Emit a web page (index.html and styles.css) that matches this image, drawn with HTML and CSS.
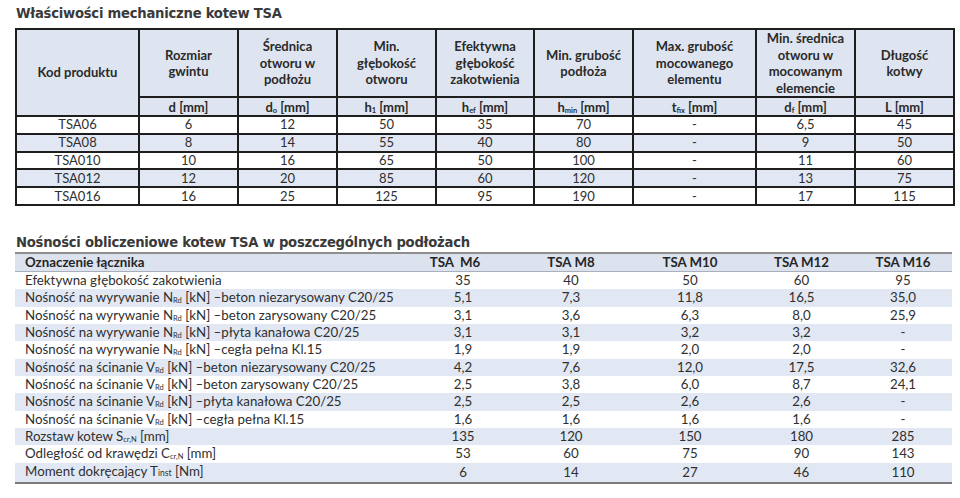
FILE: index.html
```html
<!DOCTYPE html>
<html lang="pl">
<head>
<meta charset="utf-8">
<link rel="stylesheet" href="styles.css">
</head>
<body>
<div class="page">
  <h2 class="title t1">Właściwości mechaniczne kotew TSA</h2>
  <table class="mech">
    <colgroup>
      <col class="w123"><col class="w99"><col class="w99"><col class="w99"><col class="w98"><col class="w99"><col class="w123"><col class="w99"><col class="w99">
    </colgroup>
    <thead>
      <tr class="h1">
        <th rowspan="2">Kod produktu</th>
        <th>Rozmiar<br>gwintu</th>
        <th>Średnica<br>otworu w<br>podłożu</th>
        <th>Min.<br>głębokość<br>otworu</th>
        <th>Efektywna<br>głębokość<br>zakotwienia</th>
        <th>Min. grubość<br>podłoża</th>
        <th>Max. grubość<br>mocowanego<br>elementu</th>
        <th>Min. średnica<br>otworu w<br>mocowanym<br>elemencie</th>
        <th>Długość<br>kotwy</th>
      </tr>
      <tr class="h2">
        <th>d [mm]</th>
        <th>d<sub>o</sub> [mm]</th>
        <th>h<sub>1</sub> [mm]</th>
        <th>h<sub>ef</sub> [mm]</th>
        <th>h<sub>min</sub> [mm]</th>
        <th>t<sub>fix</sub> [mm]</th>
        <th>d<sub>f</sub> [mm]</th>
        <th>L [mm]</th>
      </tr>
    </thead>
    <tbody>
      <tr><td>TSA06</td><td>6</td><td>12</td><td>50</td><td>35</td><td>70</td><td>-</td><td>6,5</td><td>45</td></tr>
      <tr class="alt"><td>TSA08</td><td>8</td><td>14</td><td>55</td><td>40</td><td>80</td><td>-</td><td>9</td><td>50</td></tr>
      <tr><td>TSA010</td><td>10</td><td>16</td><td>65</td><td>50</td><td>100</td><td>-</td><td>11</td><td>60</td></tr>
      <tr class="alt"><td>TSA012</td><td>12</td><td>20</td><td>85</td><td>60</td><td>120</td><td>-</td><td>13</td><td>75</td></tr>
      <tr><td>TSA016</td><td>16</td><td>25</td><td>125</td><td>95</td><td>190</td><td>-</td><td>17</td><td>115</td></tr>
    </tbody>
  </table>

  <h2 class="title t2">Nośności obliczeniowe kotew TSA w poszczególnych podłożach</h2>
  <table class="loads">
    <colgroup>
      <col class="c0"><col class="c1"><col class="c2"><col class="c3"><col class="c4"><col class="c5">
    </colgroup>
    <thead>
      <tr>
        <th class="lbl">Oznaczenie łącznika</th>
        <th class="m6">TSA&nbsp; M6</th>
        <th>TSA M8</th>
        <th>TSA M10</th>
        <th>TSA M12</th>
        <th>TSA M16</th>
      </tr>
    </thead>
    <tbody>
      <tr><td class="lbl">Efektywna głębokość zakotwienia</td><td class="m6">35</td><td>40</td><td>50</td><td>60</td><td>95</td></tr>
      <tr class="alt"><td class="lbl">Nośność na wyrywanie N<sub>Rd</sub> [kN] –beton niezarysowany C20/25</td><td class="m6">5,1</td><td>7,3</td><td>11,8</td><td>16,5</td><td>35,0</td></tr>
      <tr><td class="lbl">Nośność na wyrywanie N<sub>Rd</sub> [kN] –beton zarysowany C20/25</td><td class="m6">3,1</td><td>3,6</td><td>6,3</td><td>8,0</td><td>25,9</td></tr>
      <tr class="alt"><td class="lbl">Nośność na wyrywanie N<sub>Rd</sub> [kN] –płyta kanałowa C20/25</td><td class="m6">3,1</td><td>3,1</td><td>3,2</td><td>3,2</td><td>-</td></tr>
      <tr><td class="lbl">Nośność na wyrywanie N<sub>Rd</sub> [kN] –cegła pełna Kl.15</td><td class="m6">1,9</td><td>1,9</td><td>2,0</td><td>2,0</td><td>-</td></tr>
      <tr class="alt"><td class="lbl">Nośność na ścinanie V<sub>Rd</sub> [kN] –beton niezarysowany C20/25</td><td class="m6">4,2</td><td>7,6</td><td>12,0</td><td>17,5</td><td>32,6</td></tr>
      <tr><td class="lbl">Nośność na ścinanie V<sub>Rd</sub> [kN] –beton zarysowany C20/25</td><td class="m6">2,5</td><td>3,8</td><td>6,0</td><td>8,7</td><td>24,1</td></tr>
      <tr class="alt"><td class="lbl">Nośność na ścinanie V<sub>Rd</sub> [kN] –płyta kanałowa C20/25</td><td class="m6">2,5</td><td>2,5</td><td>2,6</td><td>2,6</td><td>-</td></tr>
      <tr><td class="lbl">Nośność na ścinanie V<sub>Rd</sub> [kN] –cegła pełna Kl.15</td><td class="m6">1,6</td><td>1,6</td><td>1,6</td><td>1,6</td><td>-</td></tr>
      <tr class="alt"><td class="lbl">Rozstaw kotew S<sub>cr,N</sub> [mm]</td><td class="m6">135</td><td>120</td><td>150</td><td>180</td><td>285</td></tr>
      <tr><td class="lbl">Odległość od krawędzi C<sub>cr,N</sub> [mm]</td><td class="m6">53</td><td>60</td><td>75</td><td>90</td><td>143</td></tr>
      <tr class="alt"><td class="lbl">Moment dokręcający T<span class="small">inst</span> [Nm]</td><td class="m6">6</td><td>14</td><td>27</td><td>46</td><td>110</td></tr>
    </tbody>
  </table>
</div>
</body>
</html>
```

FILE: styles.css
```css
html, body {
  margin: 0;
  padding: 0;
  background: #ffffff;
}

.page {
  padding: 0 7px 0 15px;
  font-family: "Lato", "Open Sans", sans-serif;
  color: #2f2f2f;
}

.title {
  margin: 0;
  font-family: "DejaVu Sans", Verdana, sans-serif;
  font-weight: bold;
  font-size: 13.2px;
  color: #3a3a3a;
  letter-spacing: -0.25px;
  padding-left: 1px;
}

.t1 {
  padding-top: 6px;
  height: 22px;
  line-height: 16px;
}

.t2 {
  margin-top: 29px;
  height: 17px;
  line-height: 16px;
}

table {
  border-collapse: collapse;
  table-layout: fixed;
  width: 938px;
}

.w123 { width: 123px; }
.w99 { width: 99px; }
.w98 { width: 98px; }

.mech th,
.mech td {
  border: 2px solid #1e1e1e;
  text-align: center;
  padding: 0;
  font-size: 13px;
}

.mech th {
  background: #dfe5f0;
  font-weight: bold;
  color: #2a2a2a;
}

.mech .h1 th {
  height: 63px;
  line-height: 16.5px;
}

.mech .h2 th {
  height: 17px;
  line-height: 16px;
}

.mech td {
  height: 15.8px;
  line-height: 15px;
  background: #ffffff;
}

.mech tr.alt td {
  background: #e2e8f3;
}

sub {
  font-size: 7.5px;
  vertical-align: -1px;
  line-height: 0;
}

.small {
  font-size: 8.5px;
}

.loads {
  width: 937px;
  border-top: 2px solid #8e8e8e;
  border-bottom: 2px solid #7a7a7a;
}

.c0 { width: 380px; }
.c1 { width: 116px; }
.c2 { width: 120px; }
.c3 { width: 118px; }
.c4 { width: 105px; }
.c5 { width: 98px; }

.loads th,
.loads td {
  padding: 0;
  text-align: center;
  font-size: 13.3px;
  height: 17.33px;
  line-height: 17px;
}

.loads thead th {
  background: #dce3ef;
  font-weight: bold;
  height: 16px;
  border-bottom: 1px solid #a9b0bb;
  color: #262626;
}

.loads .lbl {
  text-align: left;
  padding-left: 10px;
}

.loads .m6 {
  padding-left: 20px;
}

.loads thead .m6 {
  padding-left: 4px;
}

.loads tr.alt td {
  background: #e2e8f3;
}
```
